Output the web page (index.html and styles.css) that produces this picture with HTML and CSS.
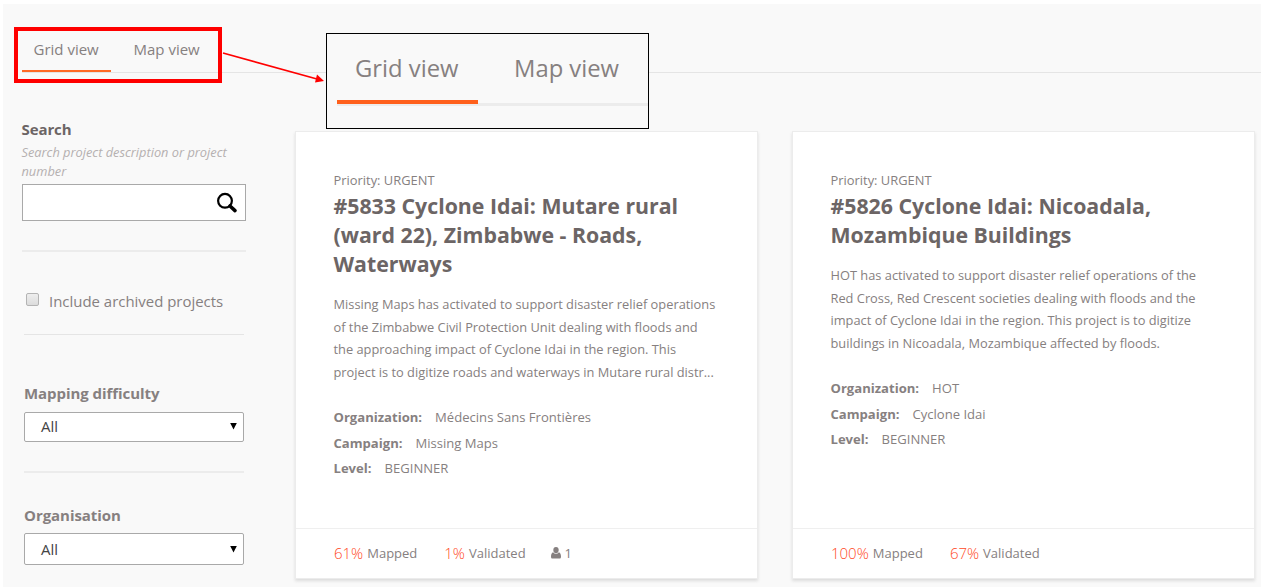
FILE: index.html
```html
<!DOCTYPE html>
<html lang="en">
<head>
<meta charset="utf-8">
<title>Projects</title>
<link rel="stylesheet" href="styles.css">
</head>
<body>
<div class="page">
  <nav class="tabs">
    <a class="tab tab-active">Grid view</a>
    <a class="tab">Map view</a>
  </nav>
  <div class="content">
    <aside class="sidebar">
      <section class="search">
        <h2 class="label label-dark">Search</h2>
        <p class="hint">Search project description or project<br>number</p>
        <div class="search-box">
          <svg class="search-icon" width="22" height="22" viewBox="0 0 22 22"><circle cx="9" cy="8.8" r="6.9" fill="none" stroke="#000" stroke-width="2.2"/><path d="M14 14l5 4.6" stroke="#000" stroke-width="3.6" stroke-linecap="round"/></svg>
        </div>
      </section>
      <section class="archived">
        <span class="checkbox"></span>
        <span class="archived-text">Include archived projects</span>
      </section>
      <section class="filter difficulty">
        <h2 class="label">Mapping difficulty</h2>
        <div class="select"><span>All</span><svg width="7" height="8" viewBox="0 0 7 8"><path d="M0.200 1h6.600L3.500 7.500z"/></svg></div>
      </section>
      <section class="filter organisation">
        <h2 class="label">Organisation</h2>
        <div class="select select-tall"><span>All</span><svg width="7" height="8" viewBox="0 0 7 8"><path d="M0.200 1h6.600L3.500 7.500z"/></svg></div>
      </section>
    </aside>
    <main class="cards">
      <article class="card">
        <div class="card-body">
          <p class="priority">Priority: URGENT</p>
          <h1 class="title">#5833 Cyclone Idai: Mutare rural<br>(ward 22), Zimbabwe - Roads,<br>Waterways</h1>
          <p class="description">Missing Maps has activated to support disaster relief operations<br>of the Zimbabwe Civil Protection Unit dealing with floods and<br>the approaching impact of Cyclone Idai in the region. This<br>project is to digitize roads and waterways in Mutare rural distr...</p>
          <dl class="facts">
            <div class="fact"><dt>Organization:</dt><dd>Médecins Sans Frontières</dd></div>
            <div class="fact"><dt>Campaign:</dt><dd>Missing Maps</dd></div>
            <div class="fact"><dt>Level:</dt><dd>BEGINNER</dd></div>
          </dl>
        </div>
        <footer class="card-footer">
          <span class="stat"><b class="percent">61%</b><span>Mapped</span></span>
          <span class="stat"><b class="percent">1%</b><span>Validated</span></span>
          <span class="stat"><svg class="user" width="10" height="12" viewBox="0 0 10 12"><ellipse cx="5" cy="3.1" rx="2.7" ry="3.1"/><path d="M2.2 5.2C.7 5.5 0 7.2 0 9.4 0 11.200.6 11.600 1.600 11.600h6.800c1 0 1.600-.4 1.600-2.200 0-2.200-.7-3.900-2.200-4.200C7 6.400 6 6.800 5 6.800S3 6.400 2.200 5.200z"/></svg><span>1</span></span>
        </footer>
      </article>
      <article class="card">
        <div class="card-body">
          <p class="priority">Priority: URGENT</p>
          <h1 class="title">#5826 Cyclone Idai: Nicoadala,<br>Mozambique Buildings</h1>
          <p class="description">HOT has activated to support disaster relief operations of the<br>Red Cross, Red Crescent societies dealing with floods and the<br>impact of Cyclone Idai in the region. This project is to digitize<br>buildings in Nicoadala, Mozambique affected by floods.</p>
          <dl class="facts">
            <div class="fact"><dt>Organization:</dt><dd>HOT</dd></div>
            <div class="fact"><dt>Campaign:</dt><dd>Cyclone Idai</dd></div>
            <div class="fact"><dt>Level:</dt><dd>BEGINNER</dd></div>
          </dl>
        </div>
        <footer class="card-footer">
          <span class="stat"><b class="percent">100%</b><span>Mapped</span></span>
          <span class="stat"><b class="percent">67%</b><span>Validated</span></span>
        </footer>
      </article>
    </main>
  </div>
</div>
<div class="highlight"></div>
<svg class="arrow" width="110" height="50" viewBox="220 40 110 50"><path d="M223 53L317 79" stroke="#f00" stroke-width="1.800"/><path d="M315 82.500L324 81l-7-6.500z" fill="#f00"/></svg>
<div class="magnifier">
  <div class="big-tabs">
    <span class="big-tab big-tab-active">Grid view</span>
    <span class="big-tab">Map view</span>
  </div>
</div>
</body>
</html>
```
FILE: styles.css
```css
* { box-sizing: border-box; }
body {
  margin: 0;
  width: 1261px;
  height: 587px;
  overflow: hidden;
  position: relative;
  background: #fff;
  padding: 4px 0 0 3px;
  font-family: "Open Sans", "Noto Sans", sans-serif;
  color: #868080;
  white-space: nowrap;
}
h1, h2, p, dl, dd { margin: 0; }
.page { height: 583px; background: #f9f9f9; }

.tabs {
  display: flex;
  height: 69px;
  margin-left: 19px;
  padding-top: 24px;
  border-bottom: 1px solid #e5e5e5;
}
.tab {
  width: 89px;
  height: 45px;
  padding-left: 11.500px;
  font-size: 15px;
  line-height: 42px;
}
.tab + .tab { margin-left: 11px; }
.tab-active { height: 44px; border-bottom: 2px solid #ff6a26; }

.content { display: flex; }
.sidebar { width: 293px; padding-left: 19px; }
.search {
  width: 224px;
  height: 179px;
  padding-top: 45px;
  border-bottom: 2px solid #ececec;
}
.label {
  font-size: 15px;
  font-weight: 700;
  line-height: 22px;
}
.search .label, .hint { margin-left: -0.500px; }
.label-dark { color: #6c6565; letter-spacing: -0.100px; }
.hint {
  padding-top: 3px;
  font-size: 12.800px;
  font-style: italic;
  line-height: 19px;
  color: #b5b0b0;
}
.search-box {
  display: flex;
  justify-content: flex-end;
  align-items: center;
  height: 37px;
  margin-top: 3px;
  padding-right: 7px;
  background: #fff;
  border: 1px solid #a9a9a9;
}
.archived {
  display: flex;
  align-items: center;
  width: 220px;
  height: 83px;
  margin-left: 2px;
  padding: 16px 0 0 2px;
  border-bottom: 1px solid #e5e5e5;
}
.checkbox {
  width: 13px;
  height: 13px;
  margin: -3px 10px 0 0;
  border: 1px solid #b4b4b4;
  border-radius: 2px;
  background: linear-gradient(#eee, #dcdcdc);
}
.archived-text { font-size: 14.950px; }
.filter { width: 220px; margin-left: 2px; }
.filter .label { letter-spacing: -0.050px; }
.difficulty {
  height: 138px;
  padding-top: 47px;
  border-bottom: 2px solid #ececec;
}
.organisation { padding-top: 32px; }
.organisation .label { margin-top: -1px; padding-bottom: 1px; }
.select {
  display: flex;
  align-items: center;
  justify-content: space-between;
  height: 30px;
  margin-top: 8px;
  padding: 0 6px 2px 16px;
  background: #fff;
  border: 1px solid #a9a9a9;
  border-radius: 2px;
  font-size: 15px;
  color: #444;
}
.select svg { fill: #000; }
.select-tall { height: 32px; margin-top: 6px; padding-bottom: 1px; }

.cards { display: flex; gap: 36px; padding-top: 59px; }
.card {
  display: flex;
  flex-direction: column;
  width: 461px;
  height: 446px;
  background: #fff;
  box-shadow: 0 0 0 1px #ececec, 0 2px 3px 1px #dcdcdc;
}
.card-body { flex: 1; padding: 38px 0 0 37.500px; }
.priority { font-size: 12.900px; line-height: 20px; }
.title {
  padding-top: 1px;
  font-size: 21.300px;
  font-weight: 700;
  line-height: 29px;
  color: #6c6565;
}
.description { padding-top: 15px; font-size: 12.840px; line-height: 22.500px; }
.facts { padding-top: 22.300px; font-size: 13.080px; line-height: 25.600px; }
.fact { display: flex; gap: 13px; }
dt { font-weight: 700; }
.card-footer {
  display: flex;
  align-items: center;
  gap: 27px;
  height: 50px;
  padding: 0 0 2px 38px;
  border-top: 1px solid #efefef;
  font-size: 13px;
}
.stat { display: flex; align-items: center; gap: 4px; }
.stat:nth-child(3) { margin-left: -2px; }
.percent { font-size: 15px; font-weight: 300; color: #ff4a26; }
.user { fill: #868080; }

.highlight {
  position: absolute;
  left: 14px;
  top: 27px;
  width: 208px;
  height: 56px;
  border: 4px solid #f00;
}
.arrow { position: absolute; left: 220px; top: 40px; }
.magnifier {
  position: absolute;
  left: 326px;
  top: 33px;
  width: 323px;
  height: 96px;
  padding-left: 10px;
  border: 1px solid #000;
  background: #f9f9f9;
}
.big-tabs {
  display: flex;
  height: 72px;
  border-bottom: 3px solid #ececec;
}
.big-tab {
  width: 141px;
  height: 70px;
  padding-left: 18px;
  font-size: 23.800px;
  line-height: 69px;
}
.big-tab + .big-tab { margin-left: 18px; }
.big-tab-active { border-bottom: 4px solid #ff601c; }
```
